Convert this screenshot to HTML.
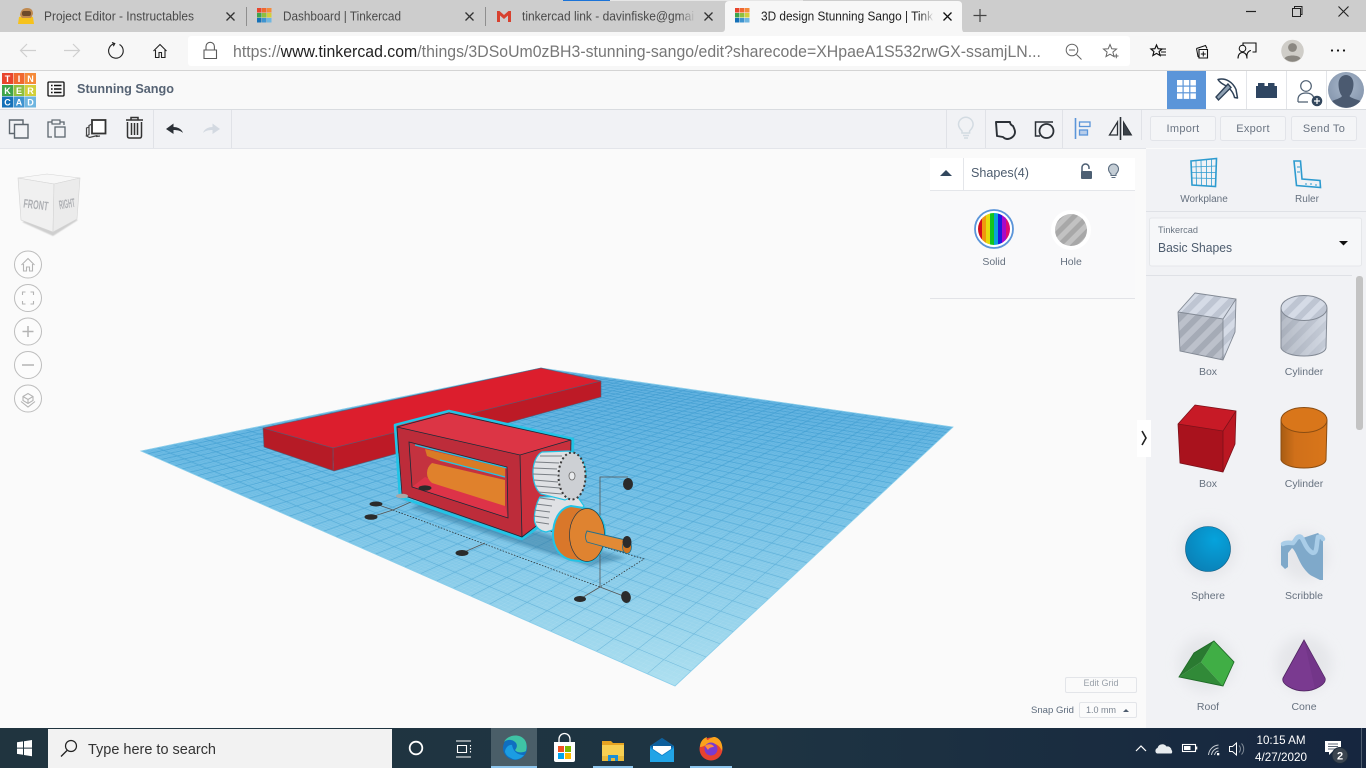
<!DOCTYPE html>
<html><head><meta charset="utf-8"><title>3D design Stunning Sango | Tinkercad</title>
<style>
html,body{margin:0;padding:0;background:#fafafa;overflow:hidden;width:1366px;height:768px}
svg{display:block;position:absolute;left:0;top:0}
text{font-family:"Liberation Sans",sans-serif}
.tab{font-size:12.5px;fill:#4a4a4a}
.lab{font-size:10.5px;fill:#66717f;text-anchor:middle}
.btn{font-size:11px;fill:#6a7482;text-anchor:middle;letter-spacing:.3px}
.br{fill:none;stroke:#222;stroke-width:1.1}
.h{fill:#2b2b2b}
.lg{font-size:9px;font-weight:bold;fill:#fff;text-anchor:middle}
</style></head>
<body>
<svg width="1366" height="768" viewBox="0 0 1366 768" xmlns="http://www.w3.org/2000/svg">
<defs>
<linearGradient id="wp" gradientUnits="userSpaceOnUse" x1="0" y1="368" x2="0" y2="686"><stop offset="0" stop-color="#3f9fd8"/><stop offset=".35" stop-color="#66b9e3"/><stop offset="1" stop-color="#aee0f0"/></linearGradient>
<pattern id="st" width="12" height="12" patternUnits="userSpaceOnUse" patternTransform="rotate(45)"><rect width="12" height="12" fill="#bcc1cb"/><rect width="6" height="12" fill="#a5abb6"/></pattern>
<pattern id="st2" width="10" height="10" patternUnits="userSpaceOnUse" patternTransform="rotate(45)"><rect width="10" height="10" fill="#c2c2c2"/><rect width="5" height="10" fill="#a8a8a8"/></pattern>
<pattern id="st3" width="12" height="12" patternUnits="userSpaceOnUse" patternTransform="rotate(45)"><rect width="12" height="12" fill="#d5dbe6"/><rect width="6" height="12" fill="#bec5d2"/></pattern>
<clipPath id="sc"><circle cx="994" cy="229" r="16"/></clipPath>
<linearGradient id="tb" x1="0" x2="1" y1="0" y2="0"><stop offset="0" stop-color="#20343f"/><stop offset=".55" stop-color="#1e3442"/><stop offset="1" stop-color="#16263f"/></linearGradient>
<linearGradient id="oc" x1="0" x2="1" y1="0" y2="0"><stop offset="0" stop-color="#a85c12"/><stop offset=".3" stop-color="#d0701a"/><stop offset="1" stop-color="#d9761a"/></linearGradient>
<linearGradient id="hc" x1="0" x2="1" y1="0" y2="0"><stop offset="0" stop-color="#8f959f"/><stop offset="1" stop-color="#cfd5df"/></linearGradient>
<linearGradient id="fd1" x1="0" x2="1" y1="0" y2="0"><stop offset="0" stop-color="#cdcdcd" stop-opacity="0"/><stop offset="1" stop-color="#cdcdcd"/></linearGradient>
<linearGradient id="fd2" x1="0" x2="1" y1="0" y2="0"><stop offset="0" stop-color="#f7f7f7" stop-opacity="0"/><stop offset="1" stop-color="#f7f7f7"/></linearGradient>
<radialGradient id="sph" cx=".65" cy=".3" r=".8"><stop offset="0" stop-color="#06a3dc"/><stop offset="1" stop-color="#0a7fb5"/></radialGradient>
<radialGradient id="av" cx=".5" cy=".4" r=".7"><stop offset="0" stop-color="#a9b8cb"/><stop offset="1" stop-color="#7f90a8"/></radialGradient>
<filter id="b1"><feGaussianBlur stdDeviation="6"/></filter>
<filter id="b2"><feGaussianBlur stdDeviation=".5"/></filter>
<filter id="b3"><feGaussianBlur stdDeviation="1.500"/></filter>
</defs>

<!-- main bg -->
<rect width="1366" height="768" fill="#fafafa"/>

<!-- browser tab strip -->
<rect width="1366" height="32" fill="#cdcdcd"/>
<rect x="610" y="0" width="193" height="1" fill="#e6e6e6"/>
<rect x="563" y="0" width="47" height="1" fill="#1a73d8"/>
<path d="M722 32q3 0 3-4V5q0-4 4-4h229q4 0 4 4v23q0 4 3 5z" fill="#f7f7f7"/>
<rect x="246" y="7" width="1" height="19" fill="#8f8f8f"/><rect x="485" y="7" width="1" height="19" fill="#8f8f8f"/>
<!-- instructables icon -->
<path d="M18 24l1-7 7-2 7 2 1 7z" fill="#f6c21c"/><path d="M20 15q1-7 7-7t6 6l-2 4h-9z" fill="#c08a50"/><rect x="22" y="11" width="9" height="5" fill="#6d4a2a" rx="2"/>
<text x="44" y="20.5" class="tab" textLength="150" lengthAdjust="spacingAndGlyphs">Project Editor - Instructables</text>
<g stroke="#333" stroke-width="1.3"><path d="M226.500 12.500l8 8m0-8l-8 8M465.500 12.500l8 8m0-8l-8 8M704.500 12.500l8 8m0-8l-8 8"/><path d="M943.500 12.500l8 8m0-8l-8 8" stroke="#111"/></g>
<!-- small tk logos -->
<g>
<rect x="257" y="8" width="4.500" height="4.500" fill="#e8452c"/><rect x="262" y="8" width="4.500" height="4.500" fill="#f0682f"/><rect x="267" y="8" width="4.500" height="4.500" fill="#f58a3a"/>
<rect x="257" y="13" width="4.500" height="4.500" fill="#3fa44a"/><rect x="262" y="13" width="4.500" height="4.500" fill="#8fbf3f"/><rect x="267" y="13" width="4.500" height="4.500" fill="#d2cf3a"/>
<rect x="257" y="18" width="4.500" height="4.500" fill="#1571b8"/><rect x="262" y="18" width="4.500" height="4.500" fill="#3e94d0"/><rect x="267" y="18" width="4.500" height="4.500" fill="#6fb6e0"/>
</g>
<g transform="translate(478,0)">
<rect x="257" y="8" width="4.500" height="4.500" fill="#e8452c"/><rect x="262" y="8" width="4.500" height="4.500" fill="#f0682f"/><rect x="267" y="8" width="4.500" height="4.500" fill="#f58a3a"/>
<rect x="257" y="13" width="4.500" height="4.500" fill="#3fa44a"/><rect x="262" y="13" width="4.500" height="4.500" fill="#8fbf3f"/><rect x="267" y="13" width="4.500" height="4.500" fill="#d2cf3a"/>
<rect x="257" y="18" width="4.500" height="4.500" fill="#1571b8"/><rect x="262" y="18" width="4.500" height="4.500" fill="#3e94d0"/><rect x="267" y="18" width="4.500" height="4.500" fill="#6fb6e0"/>
</g>
<text x="283" y="20.500" class="tab" textLength="118" lengthAdjust="spacingAndGlyphs">Dashboard | Tinkercad</text>
<!-- gmail -->
<path d="M497 22V11h2.500l4.500 4 4.500-4h2.500v11h-3v-6.500l-4 3.500-4-3.500V22z" fill="#d8412f"/>
<text x="522" y="20.500" class="tab" textLength="172" lengthAdjust="spacingAndGlyphs">tinkercad link - davinfiske@gmai</text>
<rect x="678" y="8" width="18" height="18" fill="url(#fd1)"/>
<text x="761" y="20.500" class="tab" style="fill:#1f1f1f" textLength="172" lengthAdjust="spacingAndGlyphs">3D design Stunning Sango | Tink</text>
<rect x="920" y="8" width="14" height="18" fill="url(#fd2)"/>
<path d="M973.500 15.500h13M980 9v13" stroke="#444" stroke-width="1.200"/>
<!-- window controls -->
<path d="M1246 11.500h10" stroke="#222" stroke-width="1.200"/>
<path d="M1292.500 8.500h8v8h-8zM1294.500 8.500v-2h7.500v8h-1.500" fill="none" stroke="#222" stroke-width="1"/>
<path d="M1338.500 6.500l10 10m0-10l-10 10" stroke="#222" stroke-width="1.100"/>

<!-- address row -->
<rect y="32" width="1366" height="38" fill="#f7f7f7"/>
<rect y="70" width="1366" height="1" fill="#d4d4d4"/>
<rect x="188" y="36" width="942" height="30" rx="3" fill="#fff"/>
<path d="M36 50.500H21m6-6.500l-6.500 6.500L27 57M64 50.500h15m-6-6.500l6.500 6.500L73 57" fill="none" stroke="#cfcfcf" stroke-width="1.200"/>
<path d="M119.500 44.500a7.300 7.300 0 1 1-5-.8M112 42.500l2.800 1-1.500 2.800" class="br" stroke-width="1.200"/>
<path d="M153.500 51l6.500-6.500 6.500 6.500M155.500 50v7.500h3.500v-5h2.500v5h3.500V50" class="br"/>
<path d="M206 50v-3.500a4.200 4.200 0 0 1 8.400 0V50M204 50h12.500v8.500H204z" fill="none" stroke="#5a5a5a" stroke-width="1.100"/>
<text x="233" y="57" style="font-size:16.300px;letter-spacing:.02px" fill="#777" textLength="808" lengthAdjust="spacingAndGlyphs">https://<tspan fill="#222">www.tinkercad.com</tspan>/things/3DSoUm0zBH3-stunning-sango/edit?sharecode=XHpaeA1S532rwGX-ssamjLN...</text>
<circle cx="1072" cy="50" r="5.800" fill="none" stroke="#666" stroke-width="1"/><path d="M1069 50h6M1076.500 54.500l5 5" stroke="#666" stroke-width="1"/>
<path d="M1110 44.500l1.800 4.300 4.700.3-3.600 3 1.100 4.500-4-2.400-4 2.400 1.100-4.500-3.600-3 4.700-.3z" fill="none" stroke="#666" stroke-width="1"/><path d="M1114 56h4.500m-2.200-2.200v4.500" stroke="#666"/>
<path d="M1156.500 45l1.600 3.700 4 .3-3 2.600 1 3.900-3.600-2.100-3.600 2.100 1-3.900-3-2.600 4-.3z" fill="none" stroke="#111" stroke-width="1.200"/><path d="M1160 49h6M1161 52h5M1160 55h6" stroke="#111"/>
<path d="M1196.500 48.500l9-3 1.500 3M1199 49.500h8.500v8.500h-8.500z" fill="none" stroke="#111" stroke-width="1.100"/><path d="M1196.500 48.500l1.500 8 1 .5M1203.300 51.500v5M1200.800 54h5" fill="none" stroke="#111"/>
<path d="M1243 46v-3h13v9h-3.500M1247 58c-1-6 3-7.500 4-7.500M1238 58.500c0-4 2-6 4.500-6s4.500 2 4.500 6" fill="none" stroke="#111" stroke-width="1.100"/><circle cx="1242.500" cy="48.500" r="3.300" fill="#f7f7f7" stroke="#111"/>
<circle cx="1292.500" cy="51" r="11.300" fill="#cfcdc8"/><circle cx="1292.500" cy="47.500" r="4.400" fill="#8a8781"/><path d="M1284.500 58.500c1.500-4 14.500-4 16 0q-8 6.500-16 0z" fill="#8a8781"/>
<circle cx="1332" cy="50.500" r="1.100" fill="#111"/><circle cx="1338" cy="50.500" r="1.100" fill="#111"/><circle cx="1344" cy="50.500" r="1.100" fill="#111"/>

<!-- tinkercad header -->
<rect y="71" width="1366" height="38" fill="#f9f9f9"/>
<rect y="109" width="1366" height="1" fill="#d9dce0"/>
<g>
<rect x="2" y="73" width="11" height="11" fill="#e8452c"/><rect x="13.500" y="73" width="11" height="11" fill="#f0682f"/><rect x="25" y="73" width="11" height="11" fill="#f58a3a"/>
<rect x="2" y="85" width="11" height="11" fill="#3fa44a"/><rect x="13.500" y="85" width="11" height="11" fill="#8fbf3f"/><rect x="25" y="85" width="11" height="11" fill="#d2cf3a"/>
<rect x="2" y="96.500" width="11" height="11" fill="#1571b8"/><rect x="13.500" y="96.500" width="11" height="11" fill="#3e94d0"/><rect x="25" y="96.500" width="11" height="11" fill="#6fb6e0"/>
<text x="7.500" y="82" class="lg">T</text><text x="19" y="82" class="lg">I</text><text x="30.500" y="82" class="lg">N</text>
<text x="7.500" y="94" class="lg">K</text><text x="19" y="94" class="lg">E</text><text x="30.500" y="94" class="lg">R</text>
<text x="7.500" y="105.500" class="lg">C</text><text x="19" y="105.500" class="lg">A</text><text x="30.500" y="105.500" class="lg">D</text>
</g>
<rect x="48" y="82" width="16" height="14" rx="1" fill="none" stroke="#111" stroke-width="1.300"/>
<path d="M51 85.500h1.600M51 89h1.600M51 92.500h1.600M54 85.500h7.500M54 89h7.500M54 92.500h7.500" stroke="#111" stroke-width="1.400"/>
<text x="77" y="93" style="font-size:13px;font-weight:bold;fill:#566374" textLength="97" lengthAdjust="spacingAndGlyphs">Stunning Sango</text>
<rect x="1167" y="71" width="39" height="38" fill="#5b95d9"/>
<rect x="1206" y="71" width="160" height="38" fill="#fff"/>
<path d="M1246.500 71v38M1286.500 71v38M1326.500 71v38" stroke="#e3e5e9"/>
<g fill="#fff"><rect x="1177" y="80" width="5.500" height="5.500"/><rect x="1183.700" y="80" width="5.500" height="5.500"/><rect x="1190.400" y="80" width="5.500" height="5.500"/><rect x="1177" y="86.700" width="5.500" height="5.500"/><rect x="1183.700" y="86.700" width="5.500" height="5.500"/><rect x="1190.400" y="86.700" width="5.500" height="5.500"/><rect x="1177" y="93.400" width="5.500" height="5.500"/><rect x="1183.700" y="93.400" width="5.500" height="5.500"/><rect x="1190.400" y="93.400" width="5.500" height="5.500"/></g>
<!-- pickaxe -->
<path d="M1218 79.500c8-2 15 3 18 10l1.500 8.500-3-.5c-1-5-5-10-10-12.500-3-1.500-5-3-6.500-5.500z" fill="#fff" stroke="#2e4157" stroke-width="1.500" stroke-linejoin="round"/>
<path d="M1228 84l-12 13 2.500 3 12.500-12.500z" fill="#8fa1b3" stroke="#2e4157" stroke-width="1.400"/>
<!-- bricks -->
<path d="M1256 86h2v-3h6.500v3h3.500v-3h6.500v3h2.500v12h-21z" fill="#2f4662"/>
<!-- add user -->
<circle cx="1306" cy="86" r="5.300" fill="#fff" stroke="#4e5f72" stroke-width="1.200"/>
<path d="M1298 102v-2.500c0-4 3-6.500 8-6.500s7 2 8 5M1298 102h10" fill="none" stroke="#4e5f72" stroke-width="1.200"/>
<circle cx="1317" cy="101" r="5.300" fill="#33475d"/><path d="M1314 101h6M1317 98v6" stroke="#fff" stroke-width="1.200"/>
<!-- avatar -->
<circle cx="1346" cy="90" r="18" fill="url(#av)"/>
<path d="M1338.500 84c0-12 15-12 15 0 0 5-2 10-4 12 1 2 6 3 11 5-8 9-20 9-28.500 0 5-2 9-3 10-5-2-2-3.500-7-3.500-12z" fill="#4b5a70"/>

<!-- toolbar -->
<rect y="110" width="1366" height="38" fill="#f1f2f5"/>
<rect y="148" width="1146" height="1" fill="#e3e5ea"/>
<path d="M153.500 110v38M231.500 110v38M946.500 110v38M985.500 110v38M1062.500 110v38M1141.500 110v30" stroke="#e0e2e7"/>
<!-- copy -->
<path d="M14 133.500H9.500V120H23v4.500M14.500 124.500h13.500v13.500H14.500z" fill="none" stroke="#5d666e" stroke-width="1.400"/>
<!-- paste -->
<path d="M52 137h-4v-15h4M60 122h4v3" fill="none" stroke="#5d666e" stroke-width="1.300"/><rect x="52" y="120" width="8" height="4" fill="none" stroke="#5d666e" stroke-width="1.200"/><rect x="55" y="127" width="10" height="10" fill="none" stroke="#5d666e" stroke-width="1.300"/>
<!-- duplicate -->
<rect x="92" y="120" width="13.500" height="13.500" fill="#fff" stroke="#333" stroke-width="1.800"/><path d="M92 124l-3 1.500v9l-2.500 1.500 3 1.500 8-2M89 127l-2.500 1v8M96 136.500l4-.5" fill="none" stroke="#444" stroke-width="1.200"/>
<!-- trash -->
<path d="M126 120h17M131 120v-2.500h7v2.500M127.500 122v14q0 2 2 2h10q2 0 2-2v-14M131.500 123v12M134.500 123v12M137.500 123v12" fill="none" stroke="#333" stroke-width="1.500"/>
<!-- undo redo -->
<path d="M166 129l7.500-5.500v3.500c5 0 8.500 2.500 9.500 6-2-2-5-3-9.500-3v4z" fill="#2b3036"/>
<path d="M220 129l-7.500-5.500v3.500c-5 0-8.500 2.500-9.500 6 2-2 5-3 9.500-3v4z" fill="#d3d9e1"/>
<!-- bulb -->
<path d="M962 131c-2-2-3.500-4-3.500-6.500a7.300 7.300 0 0 1 14.600 0c0 2.500-1.500 4.500-3.500 6.500v2h-7.600zM963 135.500h6M964 138h4" fill="none" stroke="#d3dbe2" stroke-width="1.500"/>
<!-- group -->
<path d="M996 122H1010c0 2 1 3 3 4 1 2 2 4 2 6 0 4-4 7-8 7-2 0-3-1-4-2L997 136z" fill="none" stroke="#2b3036" stroke-width="1.900" stroke-linejoin="round"/>
<!-- ungroup/hole -->
<path d="M1053 122H1035.500V136H1040" fill="none" stroke="#2b3036" stroke-width="1.500"/><circle cx="1046.500" cy="131" r="7" fill="#f1f2f5" stroke="#2b3036" stroke-width="1.800"/>
<!-- align -->
<path d="M1075.500 118v21" stroke="#5b95d9" stroke-width="1.600"/><rect x="1079.500" y="122" width="10.500" height="4.500" fill="none" stroke="#5b95d9" stroke-width="1.300"/><rect x="1079.500" y="130" width="8" height="5" fill="#b7cdea" stroke="#5b95d9" stroke-width="1.300"/>
<!-- mirror -->
<path d="M1120.500 117v23" stroke="#2b3036" stroke-width="1.600"/><path d="M1117.500 122v13h-8z" fill="none" stroke="#2b3036" stroke-width="1.300"/><path d="M1123.500 122v13h8z" fill="#3a4148" stroke="#2b3036"/>
<!-- buttons -->
<rect x="1150.500" y="116.500" width="65" height="24" rx="2" fill="#f4f5f7" stroke="#e2e4e9"/><rect x="1220.500" y="116.500" width="65" height="24" rx="2" fill="#f4f5f7" stroke="#e2e4e9"/><rect x="1291.500" y="116.500" width="65" height="24" rx="2" fill="#f4f5f7" stroke="#e2e4e9"/>
<text x="1183" y="132" class="btn">Import</text><text x="1253" y="132" class="btn">Export</text><text x="1324" y="132" class="btn">Send To</text>

<!-- workplane -->
<polygon points="141,451 541,368 953,427 675,686" fill="url(#wp)"/>
<g id="grid"></g>
<polygon points="141,451 541,368 953,427 675,686" fill="none" stroke="#8ed0ec" stroke-width=".8"/>

<!-- red base -->
<polygon points="263,428 541,368 601,381 333,448" fill="#dc1e2d"/>
<polygon points="263,428 333,448 334,471 264,447" fill="#b61b26"/>
<polygon points="333,448 601,381 601,397 334,471" fill="#bd1a26"/>
<path d="M263 428L541 368 601 381V397L334 471 264 447zM263 428L333 448 601 381M333 448V471" fill="none" stroke="#4b5f78" stroke-width=".8" opacity=".75"/>

<!-- shadow -->
<polygon points="410,508 505,540 590,566 626,558 560,538 430,500" fill="#2a6d93" opacity=".45" filter="url(#b3)"/>

<!-- selection lines -->
<path d="M393 510L600 587 644 559 540 528" fill="none" stroke="#222" stroke-width=".7" stroke-dasharray="1.500 1.500"/>
<path d="M371 517L393 510 376 504M393 510L413 501M485 543L462 553M600 587L580 599M600 587L626 597M600 587V477H628" fill="none" stroke="#555" stroke-width=".8"/>

<!-- Box -->
<polygon points="395,425 449,411 573,439 572,502 522,539 400,497" fill="none" stroke="#22c4e6" stroke-width="2.600" stroke-linejoin="round"/>
<polygon points="397,427 449,413 571,440 520,455" fill="#dc3545"/>
<polygon points="520,455 571,440 570,500 522,537" fill="#c9303d"/>
<polygon points="397,427 520,455 522,537 402,495" fill="#bd2c3a"/>
<polygon points="409,442 507,467 508,518 412,487" fill="#c4323f"/>
<polygon points="412,487 508,518 505,505 425,477" fill="#dd3348"/>
<polygon points="425,449 505,468 505,477 440,461 427,456" fill="#d97b26"/>
<path d="M415 445L507 468M440 460L505 477" stroke="#22c4e6" stroke-width="1.200" fill="none"/>
<path d="M432 463L505 480V506L432 483q-5-4-5-10t5-10z" fill="#e0812c"/>
<path d="M397 427L449 413 571 440 520 455zM397 427L402 495 522 537 570 500 571 440M520 455L522 537M409 442L507 467 508 518 412 487z" fill="none" stroke="#1a2a38" stroke-width=".8"/>

<!-- gears -->
<path d="M540 497c-4 6-7 20-5 26 2 6 6 8 11 9l20-6 18-20-7-10z" fill="#dfe1e4" stroke="#22c4e6" stroke-width="1.200"/>
<path d="M534 510l16 2M534 516l15 2M536 522l13 2M536 504l16 2M540 498l15 2" stroke="#7a7f85" stroke-width="1.100"/>
<path d="M542 452c-6 3-9 12-9 20s2 17 8 22l24 6c10-4 20-12 21-24s-6-23-17-25z" fill="#dfe1e4" stroke="#22c4e6" stroke-width="1.200"/>
<path d="M535 462l24 1M533 468l24 1M533 474l24 1M534 480l24 2M536 486l24 2M538 492l24 2M540 456l22 0" stroke="#7a7f85" stroke-width="1.100"/>
<ellipse cx="572" cy="476" rx="13.500" ry="23.500" fill="#cdd0d4" stroke="#3a3a3a" stroke-width="2" stroke-dasharray="2 2.500"/>
<ellipse cx="572" cy="476" rx="3" ry="4" fill="#e8eaec" stroke="#666" stroke-width=".8"/>

<!-- disc and shaft -->
<path d="M553 535c0-14 6-27 18-29l19 3c10 4 15 14 15 24 0 16-8 28-18 29l-16-2c-12-3-18-14-18-25z" fill="#d9772a" stroke="#22c4e6" stroke-width="2"/>
<ellipse cx="587" cy="535" rx="17.500" ry="26.500" fill="#df8330" stroke="#2a3a44" stroke-width=".7"/>
<path d="M587 531L630 541 627 553 587 542q-3-5 0-11z" fill="#e18a35" stroke="#22708e" stroke-width=".9"/>
<ellipse cx="627" cy="547" rx="4.500" ry="6.500" fill="#d2751f" stroke="#22708e" stroke-width=".8"/>

<!-- handles -->
<ellipse class="h" cx="376" cy="504" rx="6.500" ry="2.500"/><ellipse class="h" cx="371" cy="517" rx="6.500" ry="2.800"/><ellipse class="h" cx="425" cy="488" rx="6.500" ry="2.600"/>
<ellipse cx="402" cy="496" rx="6" ry="2.300" fill="#a8a8a8"/><ellipse class="h" cx="462" cy="553" rx="6.500" ry="3"/><ellipse class="h" cx="580" cy="599" rx="6" ry="3"/>
<ellipse class="h" cx="626" cy="597" rx="4.800" ry="6" transform="rotate(-15 626 597)"/><ellipse class="h" cx="628" cy="484" rx="5" ry="6"/><ellipse class="h" cx="627" cy="542" rx="4.500" ry="6"/>

<!-- view cube -->
<polygon points="22,222 53,236 78,220 50,212" fill="#cfcfcf" filter="url(#b2)"/>
<polygon points="18,178 47,174 80,178 54,184" fill="#f7f7f7" stroke="#d4d4d4" stroke-width=".6"/>
<polygon points="18,178 54,184 53,232 21,220" fill="#f0f0f0" stroke="#d4d4d4" stroke-width=".6"/>
<polygon points="54,184 80,178 77,219 53,232" fill="#ebebeb" stroke="#d4d4d4" stroke-width=".6"/>
<text x="36" y="209" text-anchor="middle" transform="rotate(7 36 204)" style="font-size:12.500px;font-weight:bold;fill:#adafb3" textLength="25" lengthAdjust="spacingAndGlyphs">FRONT</text>
<text x="67" y="208" text-anchor="middle" transform="rotate(-9 67 204)" style="font-size:12.500px;font-weight:bold;fill:#adafb3" textLength="16" lengthAdjust="spacingAndGlyphs">RIGHT</text>
<!-- nav -->
<g fill="#fcfcfc" stroke="#bdbdbd" stroke-width="1"><circle cx="28" cy="264.500" r="13.500"/><circle cx="28" cy="298" r="13.500"/><circle cx="28" cy="331.500" r="13.500"/><circle cx="28" cy="365" r="13.500"/><circle cx="28" cy="398.500" r="13.500"/></g>
<g fill="none" stroke="#b4b4b4" stroke-width="1.100">
<path d="M21.500 265l6.500-6.500 6.500 6.500M23.500 264v7h3v-4h3v4h3v-7"/>
<path d="M22.500 295v-3h3M30.500 292h3v3M33.500 301v3h-3M25.500 304h-3v-3"/>
<path d="M22.500 331.500h11M28 326v11" stroke-width="1.500"/><path d="M22 365h12" stroke-width="1.500"/>
<path d="M23 396.500l5-3 5 3v4l-5 3-5-3zM23 396.500l5 3 5-3M28 399.500v4M21 401.500l7 5.500 7-5.500"/>
</g>

<!-- Shapes panel -->
<rect x="930" y="158" width="205" height="140" rx="2" fill="#f9f9fa"/>
<path d="M930 298.500h205" stroke="#e2e3e7"/>
<rect x="930" y="158" width="205" height="32" fill="#fff"/>
<path d="M930 190.500h205M963.500 158v32" stroke="#e4e6ea"/>
<path d="M940 176l6-6 6 6z" fill="#32475d"/>
<text x="971" y="177" style="font-size:12.500px;fill:#4d5c6e" textLength="58" lengthAdjust="spacingAndGlyphs">Shapes(4)</text>
<path d="M1082 172v-4.500a3.500 3.500 0 0 1 7 0V169" fill="none" stroke="#4d5f73" stroke-width="1.500"/><rect x="1081" y="171" width="11" height="8" rx="1" fill="#4d5f73"/>
<path d="M1111 174c-1.500-1.500-2.500-3-2.500-5a5 5 0 0 1 10 0c0 2-1 3.500-2.500 5v1.500h-5zM1111.500 177.500h4" fill="#c4cdd5" stroke="#5c6d80" stroke-width="1.100"/>
<circle cx="994" cy="229" r="19" fill="#fff" stroke="#5b95d9" stroke-width="1.800"/>
<g clip-path="url(#sc)"><rect x="978" y="213" width="4" height="32" fill="#d40a1c"/><rect x="982" y="213" width="4" height="32" fill="#f0970f"/><rect x="986" y="213" width="4" height="32" fill="#e4dc0c"/><rect x="990" y="213" width="4" height="32" fill="#14c41c"/><rect x="994" y="213" width="4" height="32" fill="#0aa4d8"/><rect x="998" y="213" width="4" height="32" fill="#1c1ce0"/><rect x="1002" y="213" width="4" height="32" fill="#a80ac8"/><rect x="1006" y="213" width="4" height="32" fill="#e00c70"/></g>
<circle cx="1071" cy="230" r="20" fill="#fff"/><circle cx="1071" cy="230" r="16" fill="url(#st2)"/>
<text x="994" y="265" class="lab">Solid</text><text x="1071" y="265" class="lab">Hole</text>

<!-- Right panel -->
<rect x="1146" y="149" width="220" height="579" fill="#f1f2f5"/>
<path d="M1146 211.500h220M1146 275.500h206" stroke="#dfe1e6"/>
<path d="M1191 161l25.500-2.500-1 28-23.500-1.500z" fill="none" stroke="#2d9bcf" stroke-width="1.600"/>
<path d="M1196 161l.5 24M1201 160.500l.5 25M1206.500 160v26M1211.500 159.500v26.500M1191.500 167l25-1M1191.500 172.500h24.500M1191.500 178l24.500.5" stroke="#2d9bcf" stroke-width=".8"/>
<text x="1204" y="202" class="lab" style="font-size:10px">Workplane</text>
<path d="M1294 161h6.500l1.500 18 18 1.500.5 7-24-2z" fill="none" stroke="#2d9bcf" stroke-width="1.600"/><path d="M1297 167h3M1297 172h3M1306 183v2M1311 183v2M1316 184v2" stroke="#2d9bcf"/>
<text x="1307" y="202" class="lab" style="font-size:10px">Ruler</text>
<rect x="1149.500" y="218" width="212" height="48" rx="2" fill="#f6f7f9" stroke="#e5e7ea"/>
<text x="1158" y="233" style="font-size:9.500px;fill:#6b7683" textLength="40" lengthAdjust="spacingAndGlyphs">Tinkercad</text>
<text x="1158" y="252" style="font-size:12.500px;fill:#4d5c6e" textLength="74" lengthAdjust="spacingAndGlyphs">Basic Shapes</text>
<path d="M1339 241h9l-4.500 4.500z" fill="#111"/>
<rect x="1356" y="276" width="7" height="154" rx="3" fill="#c3c3c3"/>

<!-- collapse tab -->
<rect x="1137" y="420" width="14" height="37" fill="#fff"/>
<path d="M1142 431l4 7-4 7" fill="none" stroke="#222" stroke-width="1.600"/>

<!-- shape soft shadows -->
<g filter="url(#b1)" fill="#dcdde1" opacity=".55"><circle cx="1208" cy="549" r="28"/><circle cx="1304" cy="556" r="24"/><circle cx="1206" cy="664" r="28"/><circle cx="1304" cy="664" r="28"/></g>

<!-- hole box -->
<polygon points="1195,293 1236,299 1223,319 1178,312" fill="url(#st3)"/>
<polygon points="1178,312 1223,319 1223,360 1180,351" fill="url(#st)"/>
<polygon points="1223,319 1236,299 1235,332 1223,360" fill="url(#st3)"/>
<path d="M1195 293L1236 299 1235 332 1223 360 1180 351 1178 312zM1178 312L1223 319 1236 299M1223 319V360" fill="none" stroke="#828994" stroke-width=".9"/>
<!-- hole cyl -->
<path d="M1281 308v40c2 5 12 8 23 8s21-3 22-8l1-40z" fill="url(#hc)"/><path d="M1281 308v40c2 5 12 8 23 8s21-3 22-8l1-40z" fill="url(#st3)" opacity=".55"/>
<ellipse cx="1304" cy="308" rx="23" ry="12.500" fill="url(#st3)" stroke="#828994"/><path d="M1281 308v40c2 5 12 8 23 8s21-3 22-8l1-40" fill="none" stroke="#828994"/>
<text x="1208" y="375" class="lab">Box</text><text x="1304" y="375" class="lab">Cylinder</text>
<!-- red box -->
<polygon points="1195,405 1236,411 1223,431 1178,424" fill="#c71a26"/>
<polygon points="1178,424 1223,431 1223,472 1180,463" fill="#a9121d"/>
<polygon points="1223,431 1236,411 1235,444 1223,472" fill="#bb1722"/>
<path d="M1195 405L1236 411 1235 444 1223 472 1180 463 1178 424zM1178 424L1223 431 1236 411M1223 431V472" fill="none" stroke="#7c1119" stroke-width=".8"/>
<!-- orange cyl -->
<path d="M1281 420v40c2 5 12 8 23 8s21-3 22-8l1-40z" fill="url(#oc)" stroke="#8b4d12"/>
<ellipse cx="1304" cy="420" rx="23" ry="12.500" fill="#d9761a" stroke="#8b4d12"/>
<text x="1208" y="487" class="lab">Box</text><text x="1304" y="487" class="lab">Cylinder</text>
<!-- sphere -->
<circle cx="1208" cy="549" r="22.500" fill="url(#sph)" stroke="#0b5d85" stroke-width=".6"/>
<!-- scribble -->
<path d="M1281 545V565l4 4 3-2V553l4-5c3 2 5 8 8 14 3 6 8 12 12 14l8 4 3 0V538L1318 533z" fill="#7fa9ca"/>
<path d="M1283 544c3-2 7-1 10-1 3-3 4-8 8-6 3 3 4 10 9 14 3 3 5 2 6-1 1-4 1-9 2-13 2-1 4 0 5 2" fill="none" stroke="#a9cde8" stroke-width="4.500" stroke-linecap="round"/>
<text x="1208" y="599" class="lab">Sphere</text><text x="1304" y="599" class="lab">Scribble</text>
<!-- roof -->
<polygon points="1214,641 1234,662 1223,686 1201,662" fill="#40ae45"/>
<polygon points="1201,662 1223,686 1179,677" fill="#318a38"/>
<polygon points="1214,641 1201,662 1179,677 1194,653" fill="#2a7a31"/>
<path d="M1214 641L1234 662 1223 686 1179 677 1194 653z" fill="none" stroke="#1f6b27" stroke-width=".9"/>
<!-- cone -->
<path d="M1304 640l-21 38c-2 6 10 13 21 13s23-7 21-13z" fill="#7a3a90" stroke="#4e2460" stroke-width=".8"/>
<path d="M1304 640l21 38c1 5-6 9-10 11z" fill="#6e3385" opacity=".6"/>
<text x="1208" y="710" class="lab">Roof</text><text x="1304" y="710" class="lab">Cone</text>

<!-- Edit grid/Snap -->
<rect x="1065.500" y="677.500" width="71" height="15" rx="1.500" fill="#fafafa" stroke="#e3e5e9"/>
<text x="1101" y="686" text-anchor="middle" style="font-size:9px;fill:#9aa1aa">Edit Grid</text>
<text x="1031" y="713" style="font-size:9.500px;fill:#5d6b7c" textLength="43" lengthAdjust="spacingAndGlyphs">Snap Grid</text>
<rect x="1079.500" y="702.500" width="57" height="15" rx="1.500" fill="#fbfbfb" stroke="#e3e5e9"/>
<text x="1086" y="713" style="font-size:9px;fill:#7b8591">1.0 mm</text>
<path d="M1123 712l3-3 3 3z" fill="#4d5c6e"/>

<!-- taskbar -->
<rect y="728" width="1366" height="40" fill="url(#tb)"/>
<g fill="#fff"><path d="M17 742.300l6-.9v6.200h-6zM24 741.200l8-1.200v7.600h-8zM17 748.600h6v6.200l-6-.9zM24 748.600h8v7.600l-8-1.200z"/></g>
<rect x="48" y="729" width="344" height="39" fill="#f2f2f2"/>
<circle cx="71" cy="746" r="5.500" fill="none" stroke="#222" stroke-width="1.200"/><path d="M67 750.500l-6 6" stroke="#222" stroke-width="1.300"/>
<text x="88" y="754" style="font-size:14.500px;fill:#333" textLength="128" lengthAdjust="spacingAndGlyphs">Type here to search</text>
<circle cx="416" cy="748" r="6.300" fill="none" stroke="#fff" stroke-width="1.800"/>
<path d="M456 741h15M456 757h15M457.500 745.500h9v7h-9zM470.500 745v1.500M470.500 748v1.500M470.500 751v1.500" fill="none" stroke="#fff" stroke-width="1.100"/>
<rect x="491" y="728" width="46" height="40" fill="#4a5e68"/>
<rect x="491" y="766" width="46" height="2" fill="#8cc4ec"/><rect x="593" y="766" width="40" height="2" fill="#8cc4ec"/><rect x="690" y="766" width="42" height="2" fill="#8cc4ec"/>
<!-- edge -->
<circle cx="515" cy="748" r="12" fill="#0f6ec0"/><path d="M504 742c3-7 15-9 20-3 3 3 3 8 2 12-3 2-9 2-11-1 1-1 3-4 1-7-3-4-9-4-12-1z" fill="#3fc3a5"/><path d="M505 752c0-4 4-8 7-7 1 5 4 10 12 10-3 4-9 6-13 3-3-1-5-3-6-6z" fill="#1b9de2"/>
<!-- store -->
<path d="M554 742h21v18q0 2-2 2h-17q-2 0-2-2z" fill="#fff"/><path d="M559 742v-3a5 5 0 0 1 11 0v3" fill="none" stroke="#fff" stroke-width="1.300"/>
<rect x="558" y="746" width="6" height="6" fill="#f25022"/><rect x="565" y="746" width="6" height="6" fill="#7fba00"/><rect x="558" y="753" width="6" height="6" fill="#00a4ef"/><rect x="565" y="753" width="6" height="6" fill="#ffb900"/>
<!-- explorer -->
<path d="M602 745v-4h9l2 2h11v2z" fill="#e6a321"/><rect x="602" y="745" width="22" height="15" fill="#f7cf52"/><rect x="602" y="756" width="22" height="5" fill="#e8b93a"/><path d="M608 761v-6h10v6h-3v-3h-4v3z" fill="#1c8fd6"/>
<!-- mail -->
<path d="M650 746l12-8 12 8v16h-24z" fill="#1180c8"/><path d="M650 746l12 8 12-8-12-8z" fill="#0d5f9c"/><path d="M653 746h18v3l-9 6-9-6z" fill="#fff"/><path d="M650 748l12 8 12-8v14h-24z" fill="#22a4e6"/>
<!-- firefox -->
<circle cx="711" cy="749" r="11.500" fill="#e8422f"/><path d="M700 747c0-6 4-9 7-10-1 2 0 3 1 3 3-3 6-3 7-3 7 2 8 10 7 14-2-5-6-8-11-7-5 0-7 3-11 3z" fill="#fba21c"/><circle cx="711" cy="749" r="6.500" fill="#7a3bd0"/><path d="M705 746c3-3 8-2 9 1-3 0-5 1-6 3z" fill="#ff8a3d"/>
<!-- tray -->
<path d="M1136 751l5-5 5 5" fill="none" stroke="#fff" stroke-width="1.200"/>
<path d="M1157 753.500a3 3 0 0 1 .5-5.500 5 5 0 0 1 9-1.500 4 4 0 0 1 5 3.500 2.500 2.500 0 0 1 0 3.500z" fill="#e8ecef"/>
<rect x="1182.500" y="744.500" width="13" height="7" fill="none" stroke="#fff" stroke-width="1.100"/><rect x="1184" y="746" width="6.500" height="4" fill="#fff"/><rect x="1196" y="746.500" width="1.300" height="3" fill="#fff"/>
<path d="M1208.500 755a11 11 0 0 1 10-10M1211.500 755a8 8 0 0 1 7-7M1214.500 755a5 5 0 0 1 4-4" fill="none" stroke="#c8ced4" stroke-width="1"/><rect x="1217" y="753" width="2.300" height="2.300" fill="#fff"/>
<path d="M1229.500 746.500h3l4-3.500v12l-4-3.500h-3z" fill="none" stroke="#fff" stroke-width="1"/><path d="M1239 745.500a5 5 0 0 1 0 7M1241.500 743.500a8 8 0 0 1 0 11" fill="none" stroke="#7f8a96" stroke-width="1"/>
<text x="1281" y="744" text-anchor="middle" style="font-size:12px;fill:#fff" textLength="49" lengthAdjust="spacingAndGlyphs">10:15 AM</text>
<text x="1281" y="761" text-anchor="middle" style="font-size:12px;fill:#fff" textLength="52" lengthAdjust="spacingAndGlyphs">4/27/2020</text>
<path d="M1325 741h16v11h-9l-3 3v-3h-4z" fill="#fff"/><path d="M1328 744h10M1328 746.500h10M1328 749h10" stroke="#22344a" stroke-width=".8"/>
<circle cx="1340" cy="755.500" r="8" fill="#3b4550" stroke="#1a2a3c"/>
<text x="1340" y="759.500" text-anchor="middle" style="font-size:11px;font-weight:bold;fill:#fff">2</text>
<path d="M1361.500 728v40" stroke="#4f5e70"/>
</svg>
<script>
(function(){
var p=[[141,451],[541,368],[953,427],[675,686]];
var x0=p[0][0],y0=p[0][1],x1=p[1][0],y1=p[1][1],x2=p[2][0],y2=p[2][1],x3=p[3][0],y3=p[3][1];
var dx1=x1-x2,dx2=x3-x2,sx=x0-x1+x2-x3,dy1=y1-y2,dy2=y3-y2,sy=y0-y1+y2-y3;
var d=dx1*dy2-dx2*dy1,g=(sx*dy2-dx2*sy)/d,h=(dx1*sy-sx*dy1)/d;
var a=x1-x0+g*x1,b=x3-x0+h*x3,c=x0,e=y1-y0+g*y1,f=y3-y0+h*y3,k=y0;
function P(u,v){var w=g*u+h*v+1;return ((a*u+b*v+c)/w).toFixed(1)+' '+((e*u+f*v+k)/w).toFixed(1);}
var minor='',major='',i,t;
for(i=0;i<=200;i++){t=i/200;
 var s='M'+P(t,0)+'L'+P(t,1)+'M'+P(0,t)+'L'+P(1,t);
 if(i%5==0)major+=s;else minor+=s;}
document.getElementById('grid').innerHTML=
 '<path d="'+minor+'" fill="none" stroke="#ffffff" stroke-opacity=".1" stroke-width=".5"/>'+
 '<path d="'+major+'" fill="none" stroke="#2f8fc4" stroke-opacity=".42" stroke-width=".6"/>';
})();
</script>
</body></html>
